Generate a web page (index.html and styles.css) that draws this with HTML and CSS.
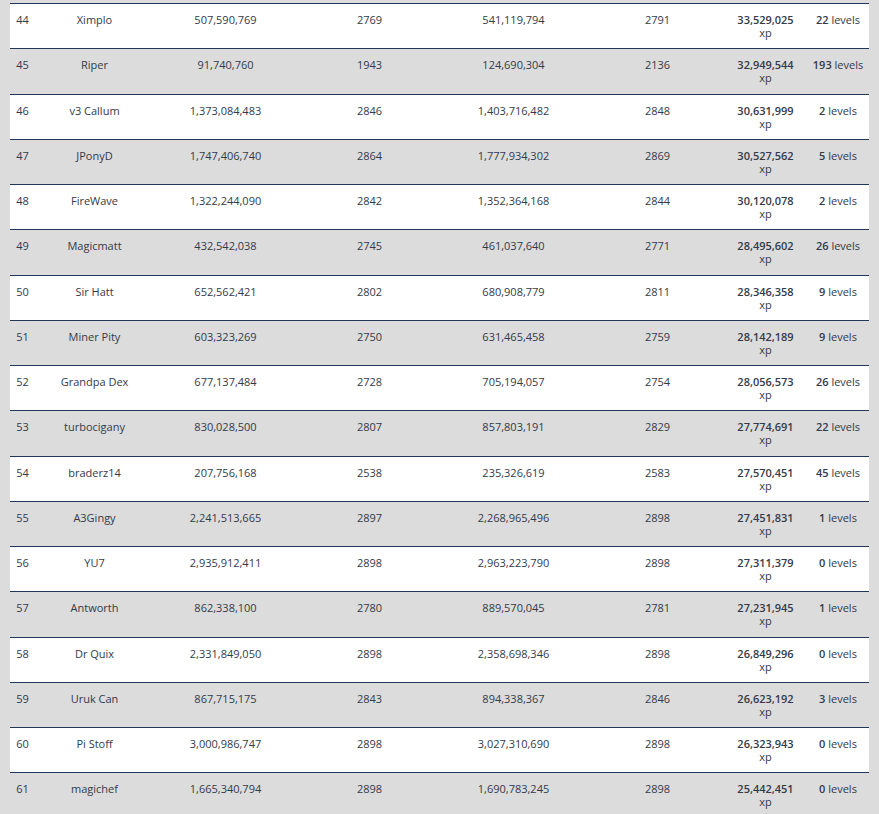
FILE: index.html
```html
<!DOCTYPE html>
<html>
<head>
<meta charset="utf-8">
<link rel="stylesheet" href="styles.css">
</head>
<body>
<div class="board">
  <div class="row"><div class="c rank">44</div><div class="c">Ximplo</div><div class="c">507,590,769</div><div class="c">2769</div><div class="c">541,119,794</div><div class="c">2791</div><div class="c xp"><b>33,529,025</b><span>xp</span></div><div class="c lv"><b>22</b> levels</div></div>
  <div class="row"><div class="c rank">45</div><div class="c">Riper</div><div class="c">91,740,760</div><div class="c">1943</div><div class="c">124,690,304</div><div class="c">2136</div><div class="c xp"><b>32,949,544</b><span>xp</span></div><div class="c lv"><b>193</b> levels</div></div>
  <div class="row"><div class="c rank">46</div><div class="c">v3 Callum</div><div class="c">1,373,084,483</div><div class="c">2846</div><div class="c">1,403,716,482</div><div class="c">2848</div><div class="c xp"><b>30,631,999</b><span>xp</span></div><div class="c lv"><b>2</b> levels</div></div>
  <div class="row"><div class="c rank">47</div><div class="c">JPonyD</div><div class="c">1,747,406,740</div><div class="c">2864</div><div class="c">1,777,934,302</div><div class="c">2869</div><div class="c xp"><b>30,527,562</b><span>xp</span></div><div class="c lv"><b>5</b> levels</div></div>
  <div class="row"><div class="c rank">48</div><div class="c">FireWave</div><div class="c">1,322,244,090</div><div class="c">2842</div><div class="c">1,352,364,168</div><div class="c">2844</div><div class="c xp"><b>30,120,078</b><span>xp</span></div><div class="c lv"><b>2</b> levels</div></div>
  <div class="row"><div class="c rank">49</div><div class="c">Magicmatt</div><div class="c">432,542,038</div><div class="c">2745</div><div class="c">461,037,640</div><div class="c">2771</div><div class="c xp"><b>28,495,602</b><span>xp</span></div><div class="c lv"><b>26</b> levels</div></div>
  <div class="row"><div class="c rank">50</div><div class="c">Sir Hatt</div><div class="c">652,562,421</div><div class="c">2802</div><div class="c">680,908,779</div><div class="c">2811</div><div class="c xp"><b>28,346,358</b><span>xp</span></div><div class="c lv"><b>9</b> levels</div></div>
  <div class="row"><div class="c rank">51</div><div class="c">Miner Pity</div><div class="c">603,323,269</div><div class="c">2750</div><div class="c">631,465,458</div><div class="c">2759</div><div class="c xp"><b>28,142,189</b><span>xp</span></div><div class="c lv"><b>9</b> levels</div></div>
  <div class="row"><div class="c rank">52</div><div class="c">Grandpa Dex</div><div class="c">677,137,484</div><div class="c">2728</div><div class="c">705,194,057</div><div class="c">2754</div><div class="c xp"><b>28,056,573</b><span>xp</span></div><div class="c lv"><b>26</b> levels</div></div>
  <div class="row"><div class="c rank">53</div><div class="c">turbocigany</div><div class="c">830,028,500</div><div class="c">2807</div><div class="c">857,803,191</div><div class="c">2829</div><div class="c xp"><b>27,774,691</b><span>xp</span></div><div class="c lv"><b>22</b> levels</div></div>
  <div class="row"><div class="c rank">54</div><div class="c">braderz14</div><div class="c">207,756,168</div><div class="c">2538</div><div class="c">235,326,619</div><div class="c">2583</div><div class="c xp"><b>27,570,451</b><span>xp</span></div><div class="c lv"><b>45</b> levels</div></div>
  <div class="row"><div class="c rank">55</div><div class="c">A3Gingy</div><div class="c">2,241,513,665</div><div class="c">2897</div><div class="c">2,268,965,496</div><div class="c">2898</div><div class="c xp"><b>27,451,831</b><span>xp</span></div><div class="c lv"><b>1</b> levels</div></div>
  <div class="row"><div class="c rank">56</div><div class="c">YU7</div><div class="c">2,935,912,411</div><div class="c">2898</div><div class="c">2,963,223,790</div><div class="c">2898</div><div class="c xp"><b>27,311,379</b><span>xp</span></div><div class="c lv"><b>0</b> levels</div></div>
  <div class="row"><div class="c rank">57</div><div class="c">Antworth</div><div class="c">862,338,100</div><div class="c">2780</div><div class="c">889,570,045</div><div class="c">2781</div><div class="c xp"><b>27,231,945</b><span>xp</span></div><div class="c lv"><b>1</b> levels</div></div>
  <div class="row"><div class="c rank">58</div><div class="c">Dr Quix</div><div class="c">2,331,849,050</div><div class="c">2898</div><div class="c">2,358,698,346</div><div class="c">2898</div><div class="c xp"><b>26,849,296</b><span>xp</span></div><div class="c lv"><b>0</b> levels</div></div>
  <div class="row"><div class="c rank">59</div><div class="c">Uruk Can</div><div class="c">867,715,175</div><div class="c">2843</div><div class="c">894,338,367</div><div class="c">2846</div><div class="c xp"><b>26,623,192</b><span>xp</span></div><div class="c lv"><b>3</b> levels</div></div>
  <div class="row"><div class="c rank">60</div><div class="c">Pi Stoff</div><div class="c">3,000,986,747</div><div class="c">2898</div><div class="c">3,027,310,690</div><div class="c">2898</div><div class="c xp"><b>26,323,943</b><span>xp</span></div><div class="c lv"><b>0</b> levels</div></div>
  <div class="row"><div class="c rank">61</div><div class="c">magichef</div><div class="c">1,665,340,794</div><div class="c">2898</div><div class="c">1,690,783,245</div><div class="c">2898</div><div class="c xp"><b>25,442,451</b><span>xp</span></div><div class="c lv"><b>0</b> levels</div></div>
</div>
</body>
</html>
```
FILE: styles.css
```css
html, body {
  margin: 0;
  padding: 0;
  background: #dcdcdc;
}
body {
  padding: 3px 10px 0 10px;
  font-family: "Open Sans", "Noto Sans", sans-serif;
  font-size: 11px;
  line-height: 13px;
  color: #333a4a;
}
.board {
  width: 859px;
}
.row {
  display: grid;
  grid-template-columns: 25px 119px 143px 145px 143px 145px 71px 68px;
  height: 45.25px;
  box-sizing: border-box;
  border-top: 1px solid #233759;
  background: #ffffff;
}
.row:nth-child(even) {
  background: #dcdcdc;
}
.c {
  text-align: center;
  padding-top: 9px;
  white-space: nowrap;
}
.xp b {
  display: block;
  font-weight: 600;
}
.xp span {
  display: block;
}
.lv {
  padding-left: 6px;
}
.lv b {
  font-weight: 600;
}
```
